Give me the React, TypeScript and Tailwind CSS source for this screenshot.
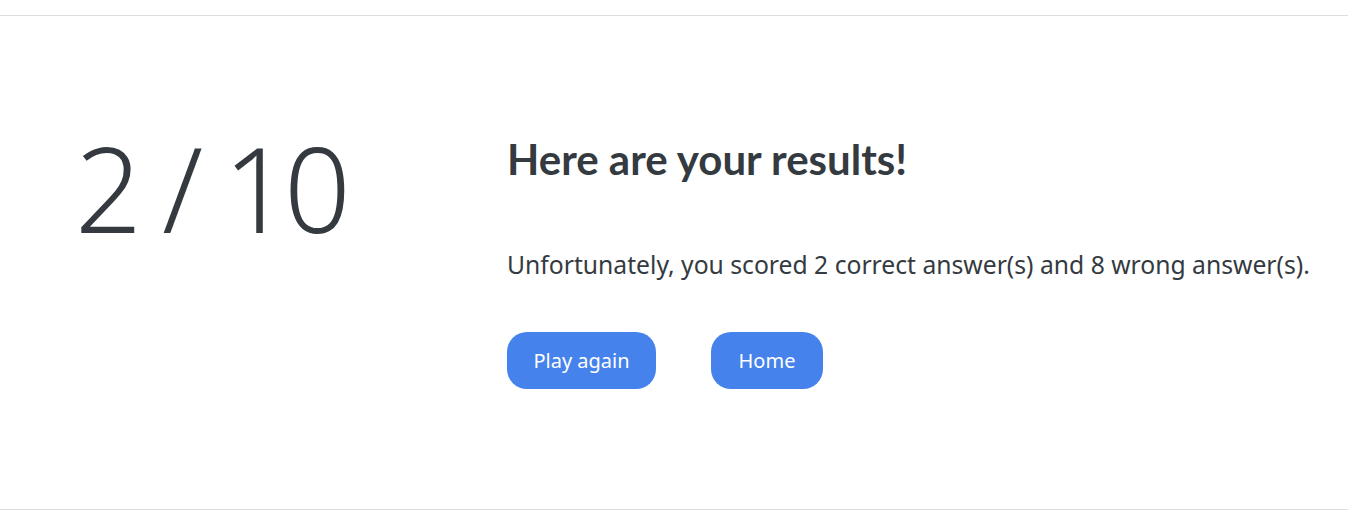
export default function App() {
  return (
    <div className="h-[526px] bg-white text-[#343a40] font-['Noto_Sans','Open_Sans',sans-serif] overflow-hidden">
      <hr className="mt-[15px] border-t border-[#dedede]" />
      <div className="flex h-[493px] items-start">
        <div className="w-[507px] shrink-0 pl-[75px] pt-[113px]">
          <div className="text-[117px] font-light leading-none tracking-[-6px] [word-spacing:2px]">2 / 10</div>
        </div>
        <div className="flex flex-col pt-[118px]">
          <h1 className="font-['Lato','Noto_Sans',sans-serif] text-[42px] font-bold leading-[1.2]">Here are your results!</h1>
          <p className="mt-[62px] text-[24.7px] leading-normal">
            Unfortunately, you scored 2 correct answer(s) and 8 wrong answer(s).
          </p>
          <div className="mt-[49px] flex gap-[55px]">
            <button className="h-[57px] w-[149px] rounded-[20px] bg-[#4582ec] text-[20px] text-white">Play again</button>
            <button className="h-[57px] w-[112px] rounded-[20px] bg-[#4582ec] text-[20px] text-white">Home</button>
          </div>
        </div>
      </div>
      <hr className="border-t border-[#dedede]" />
    </div>
  );
}
